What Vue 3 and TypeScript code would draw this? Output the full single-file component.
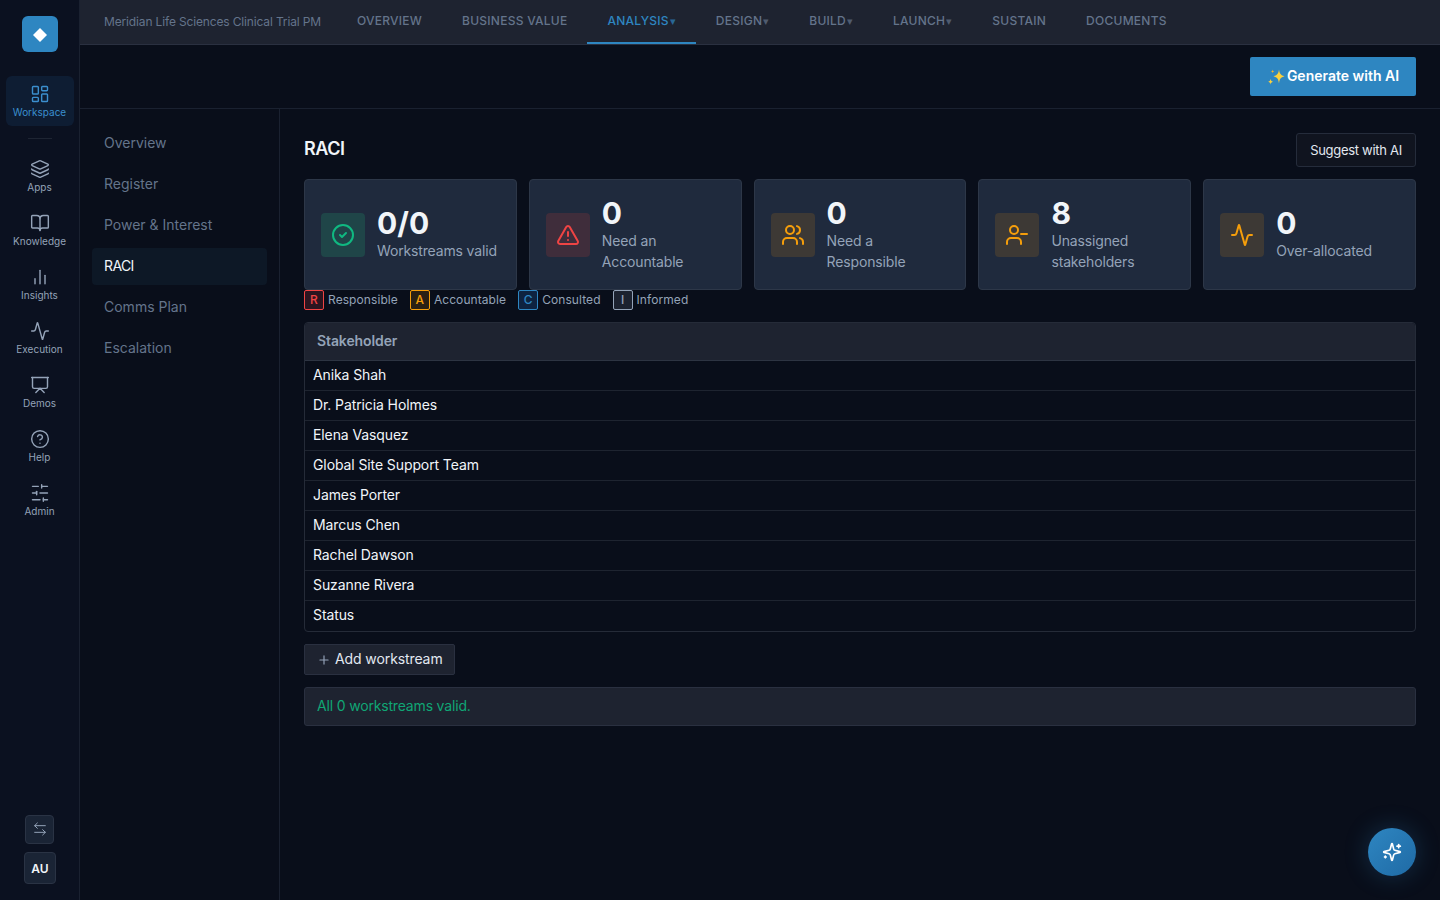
<script setup lang="ts">
const circle = (cx: number, cy: number, r: number) =>
  `M${cx} ${cy - r}a${r} ${r} 0 1 0 0 ${2 * r}a${r} ${r} 0 1 0 0 ${-2 * r}z`

const icons: Record<string, string[]> = {
  dashboard: [
    'M4 3h5a1 1 0 0 1 1 1v7a1 1 0 0 1-1 1H4a1 1 0 0 1-1-1V4a1 1 0 0 1 1-1z',
    'M15 3h5a1 1 0 0 1 1 1v3a1 1 0 0 1-1 1h-5a1 1 0 0 1-1-1V4a1 1 0 0 1 1-1z',
    'M15 12h5a1 1 0 0 1 1 1v7a1 1 0 0 1-1 1h-5a1 1 0 0 1-1-1v-7a1 1 0 0 1 1-1z',
    'M4 16h5a1 1 0 0 1 1 1v3a1 1 0 0 1-1 1H4a1 1 0 0 1-1-1v-3a1 1 0 0 1 1-1z',
  ],
  layers: [
    'M12.83 2.18a2 2 0 0 0-1.66 0L2.6 6.08a1 1 0 0 0 0 1.83l8.58 3.91a2 2 0 0 0 1.66 0l8.58-3.9a1 1 0 0 0 0-1.83z',
    'M2 12a1 1 0 0 0 .58.91l8.6 3.91a2 2 0 0 0 1.65 0l8.58-3.9A1 1 0 0 0 22 12',
    'M2 17a1 1 0 0 0 .58.91l8.6 3.91a2 2 0 0 0 1.65 0l8.58-3.9A1 1 0 0 0 22 17',
  ],
  book: [
    'M12 7v14',
    'M3 18a1 1 0 0 1-1-1V4a1 1 0 0 1 1-1h5a4 4 0 0 1 4 4 4 4 0 0 1 4-4h5a1 1 0 0 1 1 1v13a1 1 0 0 1-1 1h-6a3 3 0 0 0-3 3 3 3 0 0 0-3-3z',
  ],
  chart: ['M18 20V10', 'M12 20V4', 'M6 20v-6'],
  activity: [
    'M22 12h-2.48a2 2 0 0 0-1.93 1.46l-2.35 8.36a.25.25 0 0 1-.48 0L9.24 2.18a.25.25 0 0 0-.48 0l-2.35 8.36A2 2 0 0 1 4.49 12H2',
  ],
  presentation: ['M2 3h20', 'M21 3v11a2 2 0 0 1-2 2H5a2 2 0 0 1-2-2V3', 'm7 21 5-5 5 5'],
  help: [circle(12, 12, 10), 'M9.09 9a3 3 0 0 1 5.83 1c0 2-3 3-3 3', 'M12 17h.01'],
  sliders: ['M21 4h-7', 'M10 4H3', 'M21 12h-9', 'M8 12H3', 'M21 20h-5', 'M12 20H3', 'M14 2v4', 'M8 10v4', 'M16 18v4'],
  swap: ['M8 3 4 7l4 4', 'M4 7h16', 'm16 21 4-4-4-4', 'M20 17H4'],
  check: [circle(12, 12, 10), 'm9 12 2 2 4-4'],
  alert: ['m21.73 18-8-14a2 2 0 0 0-3.48 0l-8 14A2 2 0 0 0 4 21h16a2 2 0 0 0 1.73-3', 'M12 9v4', 'M12 17h.01'],
  users: ['M16 21v-2a4 4 0 0 0-4-4H6a4 4 0 0 0-4 4v2', circle(9, 7, 4), 'M22 21v-2a4 4 0 0 0-3-3.87', 'M16 3.13a4 4 0 0 1 0 7.75'],
  userMinus: ['M16 21v-2a4 4 0 0 0-4-4H6a4 4 0 0 0-4 4v2', circle(9, 7, 4), 'M22 11h-6'],
  plus: ['M5 12h14', 'M12 5v14'],
  sparkles: [
    'M9.937 15.5A2 2 0 0 0 8.5 14.063l-6.135-1.582a.5.5 0 0 1 0-.962L8.5 9.936A2 2 0 0 0 9.937 8.5l1.582-6.135a.5.5 0 0 1 .963 0L14.063 8.5A2 2 0 0 0 15.5 9.937l6.135 1.581a.5.5 0 0 1 0 .964L15.5 14.063a2 2 0 0 0-1.437 1.437l-1.582 6.135a.5.5 0 0 1-.963 0z',
    'M20 3v4',
    'M22 5h-4',
    'M4 17v2',
    'M5 18H3',
  ],
}

const railItems = [
  { label: 'Apps', icon: 'layers' },
  { label: 'Knowledge', icon: 'book' },
  { label: 'Insights', icon: 'chart' },
  { label: 'Execution', icon: 'activity' },
  { label: 'Demos', icon: 'presentation' },
  { label: 'Help', icon: 'help' },
  { label: 'Admin', icon: 'sliders' },
]

const tabs = [
  { label: 'Overview', caret: false, active: false },
  { label: 'Business Value', caret: false, active: false },
  { label: 'Analysis', caret: true, active: true },
  { label: 'Design', caret: true, active: false },
  { label: 'Build', caret: true, active: false },
  { label: 'Launch', caret: true, active: false },
  { label: 'Sustain', caret: false, active: false },
  { label: 'Documents', caret: false, active: false },
]

const subnav = ['Overview', 'Register', 'Power & Interest', 'RACI', 'Comms Plan', 'Escalation']

const cards = [
  { value: '0/0', label: 'Workstreams valid', icon: 'check', tone: 'green' },
  { value: '0', label: 'Need an Accountable', icon: 'alert', tone: 'red' },
  { value: '0', label: 'Need a Responsible', icon: 'users', tone: 'amber' },
  { value: '8', label: 'Unassigned stakeholders', icon: 'userMinus', tone: 'amber' },
  { value: '0', label: 'Over-allocated', icon: 'activity', tone: 'amber' },
]

const legend = [
  { key: 'R', label: 'Responsible', tone: 'r' },
  { key: 'A', label: 'Accountable', tone: 'a' },
  { key: 'C', label: 'Consulted', tone: 'c' },
  { key: 'I', label: 'Informed', tone: 'i' },
]

const rows = [
  'Anika Shah',
  'Dr. Patricia Holmes',
  'Elena Vasquez',
  'Global Site Support Team',
  'James Porter',
  'Marcus Chen',
  'Rachel Dawson',
  'Suzanne Rivera',
  'Status',
]
</script>

<template>
  <div class="app">
    <aside class="rail">
      <div class="logo">
        <svg width="14" height="14" viewBox="0 0 14 14"><path d="M7 0 14 7 7 14 0 7z" fill="#fff" /></svg>
      </div>
      <a class="rail-item active">
        <svg class="ri" viewBox="0 0 24 24"><path v-for="d in icons.dashboard" :key="d" :d="d" /></svg>
        <span>Workspace</span>
      </a>
      <div class="rail-divider"></div>
      <nav class="rail-list">
        <a v-for="item in railItems" :key="item.label" class="rail-item">
          <svg class="ri" viewBox="0 0 24 24"><path v-for="d in icons[item.icon]" :key="d" :d="d" /></svg>
          <span>{{ item.label }}</span>
        </a>
      </nav>
      <div class="rail-foot">
        <button class="swap">
          <svg viewBox="0 0 24 24"><path v-for="d in icons.swap" :key="d" :d="d" /></svg>
        </button>
        <div class="avatar">AU</div>
      </div>
    </aside>

    <div class="shell">
      <header class="topbar">
        <div class="project">Meridian Life Sciences Clinical Trial PM</div>
        <a v-for="t in tabs" :key="t.label" class="tab" :class="{ on: t.active }">
          {{ t.label }}<span v-if="t.caret" class="caret">▾</span>
        </a>
      </header>

      <div class="toolbar">
        <button class="gen">
          <svg class="spark" width="18" height="18" viewBox="0 0 18 18">
            <path d="M12 1.5c.6 4.3 1.8 5.7 5.5 6.8-3.7 1-4.9 2.5-5.5 7.2-.6-4.7-1.8-6.2-5.5-7.2 3.7-1.1 4.9-2.5 5.5-6.8z" fill="#fbd13d" />
            <path d="M3.6 10.8c.2 1.7.8 2.4 2.4 2.9-1.6.5-2.2 1.2-2.4 3-.2-1.8-.8-2.5-2.4-3 1.6-.5 2.2-1.2 2.4-2.9z" fill="#fbd13d" />
            <path d="M5.6 1.6c.1 1.1.5 1.5 1.5 1.8-1 .3-1.4.7-1.5 1.9-.1-1.2-.5-1.6-1.5-1.9 1-.3 1.4-.7 1.5-1.8z" fill="#f5b82e" />
          </svg>
          <span>Generate with AI</span>
        </button>
      </div>

      <div class="body">
        <aside class="subnav">
          <a v-for="s in subnav" :key="s" class="sub" :class="{ on: s === 'RACI' }">{{ s }}</a>
        </aside>

        <main class="main">
          <div class="head">
            <h1>RACI</h1>
            <button class="suggest">Suggest with AI</button>
          </div>

          <div class="cards">
            <div v-for="c in cards" :key="c.label" class="card">
              <div class="card-icon" :class="c.tone">
                <svg viewBox="0 0 24 24"><path v-for="d in icons[c.icon]" :key="d" :d="d" /></svg>
              </div>
              <div class="card-text">
                <div class="value">{{ c.value }}</div>
                <div class="label">{{ c.label }}</div>
              </div>
            </div>
          </div>

          <div class="legend">
            <div v-for="l in legend" :key="l.key" class="leg">
              <span class="badge" :class="l.tone">{{ l.key }}</span>
              <span class="leg-text">{{ l.label }}</span>
            </div>
          </div>

          <div class="table">
            <div class="thead">Stakeholder</div>
            <div v-for="r in rows" :key="r" class="row">{{ r }}</div>
          </div>

          <button class="add">
            <svg viewBox="0 0 24 24"><path v-for="d in icons.plus" :key="d" :d="d" /></svg>
            <span>Add workstream</span>
          </button>

          <div class="valid">All 0 workstreams valid.</div>
        </main>
      </div>
    </div>

    <button class="fab">
      <svg viewBox="0 0 24 24"><path v-for="d in icons.sparkles" :key="d" :d="d" /></svg>
    </button>
  </div>
</template>

<style>
html, body { margin: 0; background: #090e1a; }
</style>

<style scoped>
.app {
  display: flex;
  height: 900px;
  width: 1440px;
  overflow: hidden;
  background: #090e1a;
  color: #f1f5f9;
  font-family: "Inter", "Noto Sans", sans-serif;
  position: relative;
}
svg { fill: none; stroke: currentColor; stroke-width: 2; stroke-linecap: round; stroke-linejoin: round; display: block; }
button { font-family: inherit; cursor: pointer; }

.rail {
  width: 80px;
  flex: none;
  box-sizing: border-box;
  background: #0b1120;
  border-right: 1px solid #1a2130;
  display: flex;
  flex-direction: column;
  align-items: center;
  padding: 16px 0;
}
.logo {
  width: 36px;
  height: 36px;
  border-radius: 6px;
  background: #2e86c1;
  display: flex;
  align-items: center;
  justify-content: center;
  margin-bottom: 24px;
}
.logo svg { stroke: none; margin-top: 2px; }
.rail-item {
  width: 68px;
  height: 50px;
  box-sizing: border-box;
  border-radius: 6px;
  display: flex;
  flex-direction: column;
  align-items: center;
  padding-top: 8px;
  gap: 1px;
  color: #94a3b8;
  font-size: 10px;
  line-height: 14px;
}
.rail-item .ri { width: 20px; height: 20px; stroke-width: 1.7; }
.rail-item.active { background: #0e1d33; color: #3b8fce; }
.rail-divider { width: 24px; height: 1px; background: #1e2533; margin: 12px 0; }
.rail-list { display: flex; flex-direction: column; gap: 4px; }
.rail-foot { margin-top: auto; display: flex; flex-direction: column; align-items: center; gap: 8px; }
.swap {
  width: 29px;
  height: 29px;
  padding: 0 0 1px;
  border-radius: 4px;
  border: 1px solid #2a3344;
  background: #1a2435;
  color: #94a3b8;
  display: flex;
  align-items: center;
  justify-content: center;
}
.swap svg { width: 16px; height: 16px; stroke-width: 1.5; }
.avatar {
  width: 32px;
  height: 32px;
  box-sizing: border-box;
  border-radius: 4px;
  border: 1px solid #2a3344;
  background: #1a2435;
  display: flex;
  align-items: center;
  justify-content: center;
  padding-left: 1px;
  font-size: 12px;
  font-weight: 600;
  color: #f1f5f9;
}

.shell { flex: 1; min-width: 0; display: flex; flex-direction: column; }

.topbar {
  height: 45px;
  box-sizing: border-box;
  flex: none;
  background: #1e2330;
  border-bottom: 1px solid #2a3040;
  display: flex;
  align-items: stretch;
  padding-left: 24px;
}
.project {
  font-size: 12px;
  letter-spacing: -.15px;
  color: #64748b;
  margin-right: 16px;
  line-height: 44px;
  white-space: nowrap;
}
.tab {
  padding: 0 20px;
  height: 44px;
  box-sizing: border-box;
  line-height: 42px;
  border-bottom: 2px solid transparent;
  font-size: 12px;
  font-weight: 500;
  letter-spacing: .25px;
  text-transform: uppercase;
  color: #64748b;
  white-space: nowrap;
}
.tab.on { color: #2e86c1; border-bottom-color: #2e86c1; }
.caret { font-size: 11px; margin-left: 1px; opacity: .7; letter-spacing: 0; }

.toolbar {
  height: 64px;
  flex: none;
  box-sizing: border-box;
  border-bottom: 1px solid #1a2130;
  display: flex;
  align-items: center;
  justify-content: flex-end;
  padding: 0 24px;
}
.gen {
  height: 39px;
  width: 166px;
  padding: 0 0 2px;
  border: 0;
  border-radius: 2px;
  background: #2e86c1;
  color: #fff;
  font-size: 14px;
  font-weight: 600;
  display: flex;
  align-items: center;
  justify-content: center;
  gap: 2px;
}
.spark { stroke: none; margin-top: 2px; }
.spark path { stroke: none; }

.body { flex: 1; min-height: 0; display: flex; }
.subnav {
  width: 200px;
  flex: none;
  box-sizing: border-box;
  border-right: 1px solid #1a2130;
  padding: 16px 12px;
  display: flex;
  flex-direction: column;
  gap: 4px;
}
.sub {
  height: 37px;
  box-sizing: border-box;
  padding: 0 12px;
  border-radius: 4px;
  font-size: 14px;
  line-height: 35px;
  color: #64748b;
}
.sub.on { background: #0d1826; color: #f1f5f9; letter-spacing: -.6px; }

.main { flex: 1; min-width: 0; padding: 24px; }
.head { display: flex; justify-content: space-between; align-items: center; margin-bottom: 12px; height: 34px; }
h1 { margin: -4px 0 0; font-size: 18px; font-weight: 600; letter-spacing: -.5px; color: #f1f5f9; }
.suggest {
  height: 34px;
  width: 120px;
  padding: 0 0 1px;
  border-radius: 3px;
  border: 1px solid #252c3b;
  background: #10141f;
  color: #e2e8f0;
  font-size: 13px;
  letter-spacing: -.3px;
}

.cards { display: grid; grid-template-columns: repeat(5, 1fr); gap: 12px; }
.card {
  box-sizing: border-box;
  height: 111px;
  padding: 0 16px;
  border: 1px solid #2d3748;
  border-radius: 4px;
  background: #1f2a3d;
  display: flex;
  align-items: center;
  gap: 12px;
}
.card-icon {
  width: 44px;
  height: 44px;
  flex: none;
  border-radius: 4px;
  display: flex;
  align-items: center;
  justify-content: center;
}
.card-icon svg { width: 24px; height: 24px; }
.card-icon.green { background: #1f4548; color: #10b981; }
.card-icon.red { background: #3f2d3b; color: #ef4444; }
.card-icon.amber { background: #3d3935; color: #f59e0b; }
.value { font-size: 30px; font-weight: 700; line-height: 30px; margin-bottom: 2px; color: #f1f5f9; }
.label { font-size: 14px; line-height: 21px; letter-spacing: -.15px; color: #94a3b8; }

.legend { display: flex; gap: 12px; font-size: 12px; letter-spacing: .08px; color: #94a3b8; }
.leg { display: flex; align-items: center; gap: 4px; }
.leg-text { margin-bottom: 2px; }
.badge {
  width: 20px;
  height: 20px;
  box-sizing: border-box;
  padding-bottom: 1px;
  border-radius: 2px;
  border: 1px solid;
  display: flex;
  align-items: center;
  justify-content: center;
  font-size: 12px;
  font-weight: 500;
}
.badge.r { color: #ef4444; border-color: #ef4444; background: #2c1520; }
.badge.a { color: #f59e0b; border-color: #f59e0b; background: #2a2014; }
.badge.c { color: #2e86c1; border-color: #2e86c1; background: #0e2340; }
.badge.i { color: #94a3b8; border-color: #94a3b8; background: #1c2230; }

.table {
  margin-top: 12px;
  border: 1px solid #252b38;
  border-radius: 4px;
  overflow: hidden;
}
.thead {
  height: 38px;
  box-sizing: border-box;
  padding: 0 12px;
  background: #1e2330;
  border-bottom: 1px solid #2d3442;
  font-size: 14px;
  font-weight: 600;
  letter-spacing: -.1px;
  line-height: 36px;
  color: #94a3b8;
}
.row {
  height: 30px;
  box-sizing: border-box;
  padding: 0 8px;
  font-size: 14px;
  letter-spacing: -.1px;
  line-height: 28px;
  color: #f1f5f9;
  border-bottom: 1px solid #1e2430;
}
.row:last-child { border-bottom: 0; }

.add {
  margin-top: 12px;
  height: 31px;
  width: 151px;
  padding: 0 0 2px 12px;
  border: 1px solid #2a3040;
  border-radius: 2px;
  background: #1e2330;
  color: #e2e8f0;
  font-size: 14px;
  letter-spacing: -.1px;
  display: flex;
  align-items: center;
  gap: 4px;
}
.add svg { width: 14px; height: 14px; color: #94a3b8; margin-top: 2px; }

.valid {
  margin-top: 12px;
  height: 39px;
  box-sizing: border-box;
  padding: 0 12px;
  border: 1px solid #2a3040;
  border-radius: 3px;
  background: #1e2330;
  color: #10a675;
  font-size: 14px;
  letter-spacing: -.17px;
  line-height: 35px;
}

.fab {
  position: absolute;
  right: 24px;
  bottom: 24px;
  width: 48px;
  height: 48px;
  padding: 0;
  border: 0;
  border-radius: 50%;
  background: linear-gradient(135deg, #2e86c1, #1f6aa5);
  color: #fff;
  display: flex;
  align-items: center;
  justify-content: center;
  box-shadow: 0 0 24px rgba(46, 134, 193, .28);
}
.fab svg { width: 20px; height: 20px; }
</style>
